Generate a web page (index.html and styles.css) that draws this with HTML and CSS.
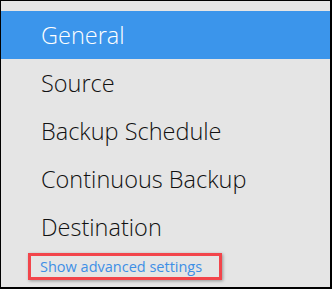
FILE: index.html
```html
<!DOCTYPE html>
<html lang="en">
<head>
  <meta charset="UTF-8">
  <meta name="viewport" content="width=device-width, initial-scale=1.0">
  <title>Settings</title>
  <link rel="stylesheet" href="styles.css">
</head>
<body>

  <div class="panel">
    <ul class="nav">
      <li class="nav-item active">General</li>
      <li class="nav-item">Source</li>
      <li class="nav-item">Backup Schedule</li>
      <li class="nav-item">Continuous Backup</li>
      <li class="nav-item">Destination</li>
    </ul>

    <!-- 進階設定連結 -->
    <div class="advanced">
      <a class="advanced-link" href="#">Show advanced settings</a>
    </div>
  </div>

</body>
</html>
```

FILE: styles.css
```css
body {
  font-family: "Open Sans", "Noto Sans", sans-serif;
  margin: 0;
  padding: 0;
  background-color: #e5e5e5;
}

.panel {
  width: 332px;
  height: 289px;
  box-sizing: border-box;
  background-color: #e5e5e5; /* 淺灰背景 */
  border-top: 1px solid #000;
  border-left: 1px solid #000;
  border-right: 2px solid #000;
  border-bottom: 2px solid #000;
  padding-top: 10px;
  overflow: hidden;
}

.nav {
  list-style: none;
  margin: 0;
  padding: 0;
}

.nav-item {
  height: 48px;
  line-height: 48px;
  padding-left: 40px;
  font-size: 23.5px;
  font-weight: 300;
  color: #111;
  box-sizing: border-box;
}

.nav-item.active {
  background-color: #3b95eb; /* 選取項目 */
  color: #fff;
  margin-left: -1px;
  padding-left: 41px;
}

.advanced {
  display: inline-block;
  margin: 2px 0 0 27px;
  padding: 0 17px 0 9px;
  border: 3px solid #f2454b;
  box-shadow: 1px 1px 3px rgba(0, 0, 0, 0.35);
  line-height: 20px;
}

.advanced-link {
  font-size: 14.5px;
  color: #3d8fe6;
  text-decoration: none;
}
```
